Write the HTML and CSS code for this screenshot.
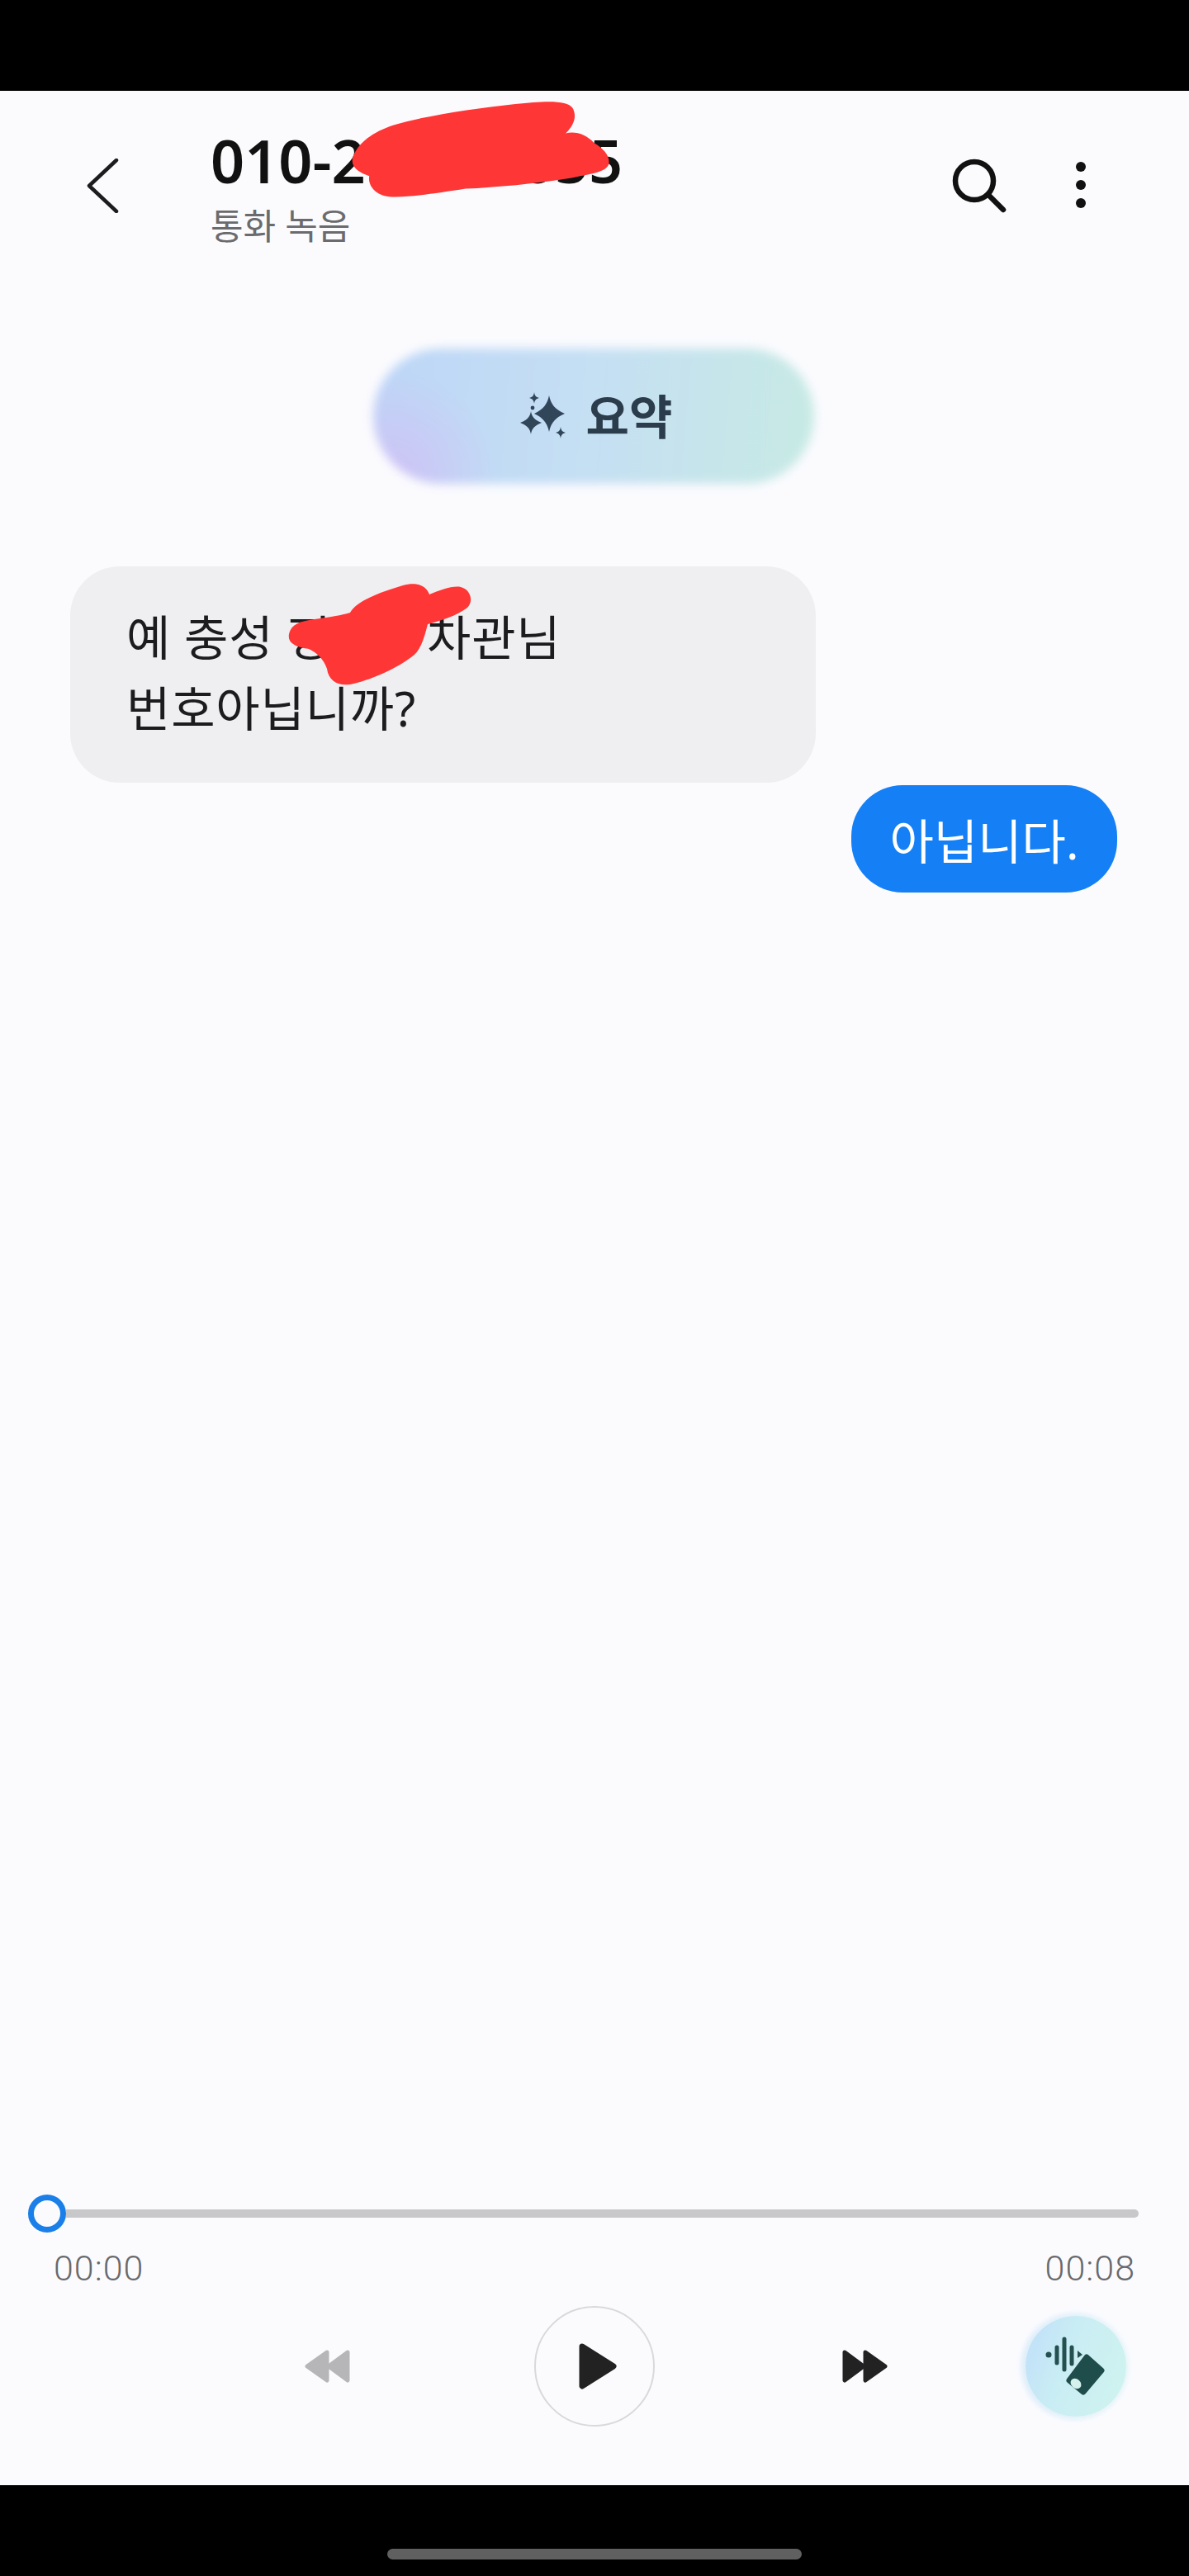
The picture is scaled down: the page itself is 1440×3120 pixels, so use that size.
FILE: index.html
```html
<!DOCTYPE html>
<html lang="ko">
<head>
    <meta charset="UTF-8">
    <meta name="viewport" content="width=device-width, initial-scale=1.0">
    <title>통화 녹음</title>
    <link rel="stylesheet" href="styles.css">
</head>
<body>
    <div class="black-bar"></div>
    <div class="app">
        <header class="header">
            <svg class="back-icon" width="40" height="66" viewBox="0 0 40 66">
                <path d="M37 2 L4 33 L37 64" fill="none" stroke="#1c1c1e" stroke-width="4.5" stroke-linecap="round" stroke-linejoin="round"/>
            </svg>
            <div class="title-block">
                <div class="title">010-2000-0055</div>
                <div class="subtitle">통화 녹음</div>
                <!-- redaction stroke over the number -->
                <svg class="scribble scribble-title" width="324" height="120" viewBox="0 0 350 125" preserveAspectRatio="none">
                    <path d="M2 72 C8 52 30 38 55 30 C100 17 160 9 215 3 C255 -1 283 -2 290 8 C296 18 292 30 281 40 C295 37 308 42 318 52 C332 60 340 70 337 80 C332 90 310 92 290 96 C240 104 190 108 150 110 C110 116 70 122 50 120 C32 118 22 106 24 94 C12 90 0 84 2 72 Z" fill="#ff3636"/>
                </svg>
            </div>
            <div class="header-actions">
                <svg class="search-icon" width="70" height="70" viewBox="0 0 70 70">
                    <circle cx="28" cy="28" r="23" fill="none" stroke="#111" stroke-width="6.5"/>
                    <path d="M45 45 L63 63" stroke="#111" stroke-width="6.5" stroke-linecap="round"/>
                </svg>
                <div class="more-icon"><span></span><span></span><span></span></div>
            </div>
        </header>

        <main class="conversation">
            <button class="summary">
                <svg width="60" height="60" viewBox="0 0 60 60" fill="#32465a">
                    <path d="M37 5 C39 15 44 22 56 27 C44 32 39 39 37 49 C35 39 30 32 19 27 C30 22 35 15 37 5 Z"/>
                    <path d="M15 24 C16 31 20 35 28 38 C20 41 16 45 15 52 C14 45 10 41 2 38 C10 35 14 31 15 24 Z"/>
                    <path d="M19 1 C19.600 5 21 7 25 8 C21 9 19.600 11 19 15 C18.400 11 17 9 13 8 C17 7 18.400 5 19 1 Z"/>
                    <path d="M51 43 C51.600 47 53 49 57 50 C53 51 51.600 53 51 57 C50.400 53 49 51 45 50 C49 49 50.400 47 51 43 Z"/>
                    <circle cx="17" cy="20" r="2.400"/>
                </svg>
                <span class="summary-label">요약</span>
            </button>

            <div class="bubble-in">
                <p class="bubble-text">예 충성 정<span class="masked">○○</span>차관님<br>번호아닙니까?</p>
                <svg class="scribble scribble-name" width="224" height="124" viewBox="0 0 224 124">
                    <path d="M2 62 C5 48 18 46 40 43 C60 40 70 38 76 36 C84 22 110 12 140 3 C155 -1 168 2 172 14 C185 9 200 3 210 5 C222 8 226 22 218 30 C205 40 185 46 170 50 C165 70 160 84 150 90 C130 105 100 118 76 123 C60 125 50 118 48 104 C44 92 35 84 26 80 C12 78 0 74 2 62 Z" fill="#ff3636"/>
                </svg>
            </div>

            <div class="bubble-out">아닙니다.</div>
        </main>

        <section class="player">
            <div class="slider">
                <span class="knob"></span>
                <span class="track"></span>
            </div>
            <div class="times">
                <span>00:00</span>
                <span>00:08</span>
            </div>
            <div class="controls">
                <svg class="rewind" width="56" height="42" viewBox="0 0 56 42" fill="#b6b6b8" stroke="#b6b6b8" stroke-width="5" stroke-linejoin="round">
                    <path d="M27 4 L3 21 L27 38 Z"/>
                    <path d="M52 4 L29 21 L52 38 Z"/>
                </svg>
                <button class="play">
                    <svg width="46" height="56" viewBox="0 0 46 56" fill="#222" stroke="#222" stroke-width="7" stroke-linejoin="round">
                        <path d="M4 4 L42 28 L4 52 Z"/>
                    </svg>
                </button>
                <svg class="forward" width="56" height="42" viewBox="0 0 56 42" fill="#222" stroke="#222" stroke-width="5" stroke-linejoin="round">
                    <path d="M4 4 L27 21 L4 38 Z"/>
                    <path d="M29 4 L53 21 L29 38 Z"/>
                </svg>
                <button class="eraser">
                    <svg width="80" height="72" viewBox="0 0 80 72">
                        <circle cx="7" cy="22" r="3.500" fill="#24504f"/>
                        <path d="M17 13 V32 M26 3 V40 M35 13 V33" stroke="#24504f" stroke-width="5" stroke-linecap="round"/>
                        <path d="M42 17 L48 22 L42 26 Z" fill="#24504f"/>
                        <path d="M53 25 L71 41 L49 67 L32 53 Z" fill="#1f4d4b" stroke="#1f4d4b" stroke-width="7" stroke-linejoin="round"/>
                        <ellipse cx="40" cy="57" rx="7" ry="5.500" transform="rotate(40 40 57)" fill="#d5f1ee"/>
                    </svg>
                </button>
            </div>
        </section>
    </div>
    <div class="black-bar bottom-bar">
        <span class="home-pill"></span>
    </div>
</body>
</html>
```

FILE: styles.css
```css
body {
    margin: 0;
    width: 1440px;
    height: 3120px;
    display: flex;
    flex-direction: column;
    background-color: #000;
    font-family: "Noto Sans", "Noto Sans CJK KR", sans-serif;
    color: #1c1c1e;
    overflow: hidden;
}
button {
    border: none;
    padding: 0;
    background: none;
    font-family: inherit;
}
.black-bar {
    height: 110px;
    flex: none;
    background-color: #000;
}
.bottom-bar {
    display: flex;
    justify-content: center;
    padding-top: 77px;
    box-sizing: border-box;
}
.home-pill {
    width: 502px;
    height: 13px;
    border-radius: 7px;
    background-color: #606060;
}
.app {
    flex: 1;
    display: flex;
    flex-direction: column;
    background-color: #fbfbfe;
}

/* header */
.header {
    display: flex;
    align-items: flex-start;
    padding: 44px 0 0 104px;
    height: 200px;
    box-sizing: border-box;
}
.back-icon {
    margin-top: 38px;
    flex: none;
}
.title-block {
    position: relative;
    margin-left: 111px;
    flex: 1;
}
.title {
    font-size: 72px;
    line-height: 80px;
    font-weight: 600;
    color: #111;
}
.subtitle {
    font-size: 43px;
    line-height: 56px;
    margin-top: 12px;
    color: #6b6b6e;
}
.scribble {
    position: absolute;
}
.scribble-title {
    left: 170px;
    top: -31px;
}
.header-actions {
    display: flex;
    align-items: flex-start;
    padding-top: 37px;
    margin-right: 125px;
    gap: 81px;
}
.more-icon {
    display: flex;
    flex-direction: column;
    gap: 10px;
    padding-top: 5px;
}
.more-icon span {
    width: 12px;
    height: 12px;
    border-radius: 50%;
    background-color: #111;
}

/* conversation */
.conversation {
    flex: 1;
    display: flex;
    flex-direction: column;
}
.summary {
    position: relative;
    width: 534px;
    height: 164px;
    margin: 112px 0 0 452px;
    display: flex;
    align-items: center;
    justify-content: center;
    gap: 22px;
    padding-left: 4px;
    box-sizing: border-box;
}
.summary::before {
    content: "";
    position: absolute;
    inset: 0;
    border-radius: 82px;
    background:
        radial-gradient(circle at 4% 95%, rgba(208, 192, 245, 0.9), rgba(208, 192, 245, 0) 24%),
        linear-gradient(95deg, #bdd6f7 0%, #c5dff3 50%, #c7eae4 100%);
    filter: blur(6px);
}
.summary svg,
.summary-label {
    position: relative;
}
.summary-label {
    font-size: 57px;
    line-height: 64px;
    font-weight: 700;
    color: #2b3d4c;
}
.bubble-in,
.bubble-out {
    font-size: 58px;
    box-sizing: border-box;
}
.bubble-in {
    position: relative;
    width: 903px;
    height: 262px;
    margin: 100px 0 0 85px;
    padding: 43px 0 0 68px;
    border-radius: 60px;
    background-color: #efeff1;
    color: #1c1c1e;
}
.bubble-text {
    margin: 0;
    line-height: 86px;
    letter-spacing: 0.8px;
}
.masked {
    font-size: 52px;
    line-height: 1;
    padding-right: 10px;
}
.scribble-name {
    left: 263px;
    top: 20px;
}
.bubble-out {
    align-self: flex-end;
    height: 130px;
    width: 322px;
    margin: 3px 87px 0 0;
    padding-top: 6px;
    border-radius: 62px;
    background-color: #1580f5;
    color: #fff;
    display: flex;
    align-items: center;
    justify-content: center;
    line-height: 1;
}

/* player */
.player {
    padding: 0 61px 0 34px;
    height: 352px;
    box-sizing: border-box;
}
.slider {
    display: flex;
    align-items: center;
    height: 46px;
}
.knob {
    width: 46px;
    height: 46px;
    flex: none;
    box-sizing: border-box;
    border: 7px solid #1a7fe8;
    border-radius: 50%;
    background-color: #fbfbfe;
}
.track {
    flex: 1;
    height: 10px;
    border-radius: 0 5px 5px 0;
    background-color: #c8c8cb;
}
.times {
    display: flex;
    justify-content: space-between;
    padding: 0 4px 0 31px;
    margin-top: 18px;
    font-family: Roboto, "Noto Sans", sans-serif;
    font-size: 43px;
    line-height: 50px;
    letter-spacing: 1px;
    font-weight: 300;
    color: #69696c;
}
.controls {
    display: flex;
    align-items: center;
    margin-top: 21px;
}
.rewind {
    margin-left: 335px;
    flex: none;
}
.play {
    width: 146px;
    height: 146px;
    flex: none;
    margin-left: 222px;
    border: 2px solid #d9d9dc;
    border-radius: 50%;
    display: flex;
    align-items: center;
    justify-content: center;
    padding-left: 8px;
    box-sizing: border-box;
}
.forward {
    margin-left: 226px;
    flex: none;
}
.eraser {
    position: relative;
    width: 122px;
    height: 122px;
    flex: none;
    margin-left: 167px;
    border-radius: 50%;
    display: flex;
    align-items: center;
    justify-content: center;
    background: linear-gradient(110deg, #bfdefa 0%, #c9edf4 40%, #d0f4ee 100%);
    box-shadow: 0 0 10px 1px #e2f5f6, -3px 0 9px #cfe0fa;
}
```
